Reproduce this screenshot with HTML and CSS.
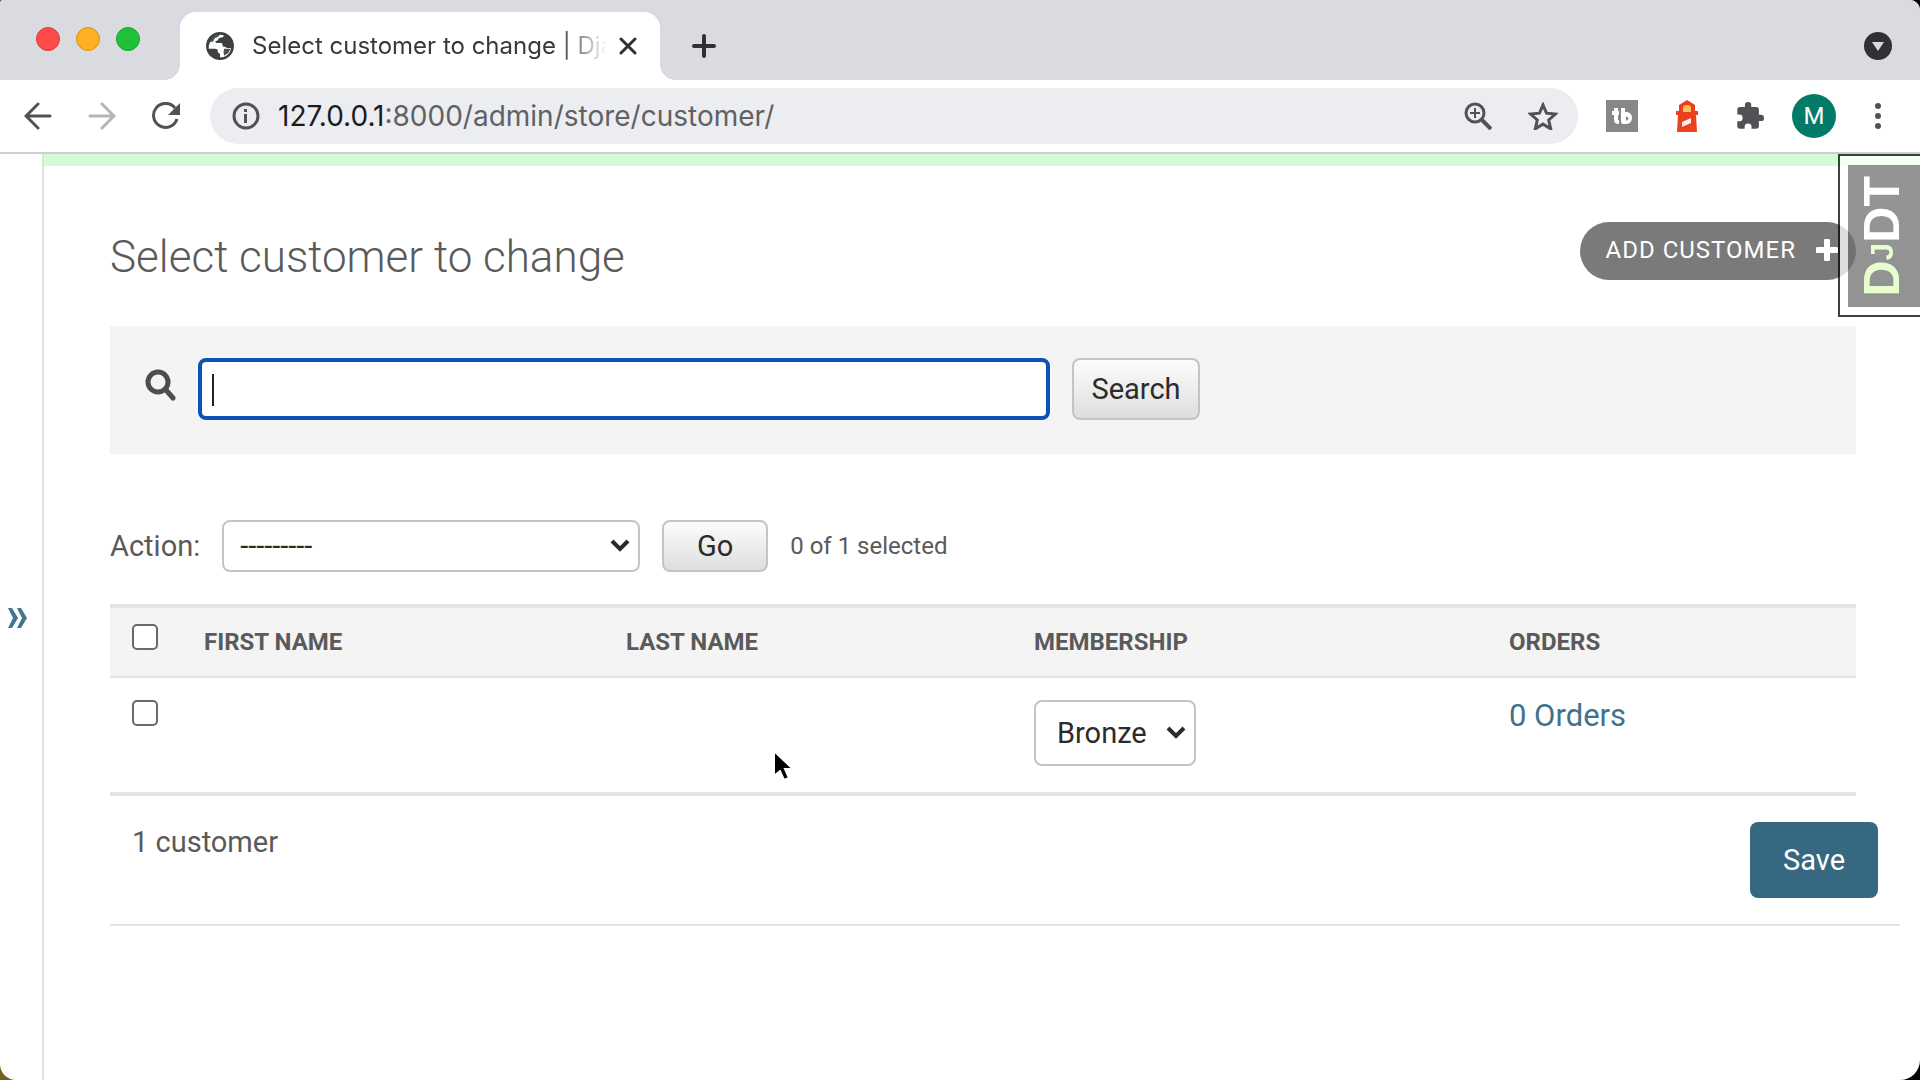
FILE: index.html
```html
<!DOCTYPE html>
<html lang="en">
<head>
<meta charset="utf-8">
<title>Select customer to change | Django site admin</title>
<link rel="stylesheet" href="styles.css">
</head>
<body>
<div class="window">
  <header class="tab-strip">
    <div class="lights">
      <span class="light light-close"></span>
      <span class="light light-min"></span>
      <span class="light light-max"></span>
    </div>
    <div class="tab">
      <svg class="icon-28" viewBox="2 2 20 20" aria-hidden="true"><path fill="#3c4043" d="M12 2C6.480 2 2 6.480 2 12s4.480 10 10 10 10-4.480 10-10S17.520 2 12 2z"/><path fill="#fff" d="M15.200 4.700c-1 .1-1 1.200-1.800 1.300l-2 .2c-.8.200-.5 1.400-1.200 1.800-.7.400-1.500.2-1.500 1 0 .6.600.9 1.200.9h3c.9 0 .8 1 .9 1.700.1.800.8 1 1.500 1 .8 0 1 .8 1.800.8h2.700c-.1 2.500-1.500 4.600-3.600 5.700-1 .6-2.600 1-4.200.9v-2c0-1-.9-.9-1.400-1.400-.5-.6.100-1.500-.5-2.100-.7-.7-1.700-.5-2.600-.5H4c-.1-1.300 0-2.600.6-3.900C5.900 6.500 8.700 4 12 4c1.200 0 2.300.2 3.200.7z"/><path fill="#3c4043" d="M4.300 9.500C5.500 6.300 8.500 4 12 4l-1.500 1.500-2.200 1L7 9H4.500zM15 14h4.500l-1.500 3-3 2-.5-2.500z" opacity=".9"/></svg>
      <span class="tab-title">Select customer to change | Dja</span>
      <button class="plain tab-close" aria-label="Close tab"><svg width="18" height="18" viewBox="0 0 18 18"><path d="M2 2l14 14M16 2L2 16" stroke="#2f3136" stroke-width="3" stroke-linecap="round"/></svg></button>
    </div>
    <button class="plain new-tab" aria-label="New tab"><svg width="24" height="24" viewBox="0 0 24 24"><path d="M12 2v20M2 12h20" stroke="#303136" stroke-width="4" stroke-linecap="round"/></svg></button>
    <button class="plain tab-search" aria-label="Search tabs"><svg width="28" height="28" viewBox="0 0 28 28"><circle cx="14" cy="14" r="14" fill="#303136"/><path d="M8 10h12l-6 9z" fill="#dadbe0"/></svg></button>
  </header>

  <div class="toolbar">
    <nav class="nav-buttons">
      <button class="plain" aria-label="Back"><svg width="28" height="28" viewBox="0 0 28 28" fill="none" stroke="#505256" stroke-width="3" stroke-linecap="round"><path d="M26 14H3M14 2L2 14l12 12"/></svg></button>
      <button class="plain" aria-label="Forward"><svg width="28" height="28" viewBox="0 0 28 28" fill="none" stroke="#b4b5b7" stroke-width="3" stroke-linecap="round"><path d="M2 14h23M14 2l12 12-12 12"/></svg></button>
      <button class="plain" aria-label="Reload"><svg width="28" height="28" viewBox="0 0 28 28"><path d="M25 17A12 12 0 1 1 23 6" fill="none" stroke="#505256" stroke-width="3"/><path d="M28 1v12H16z" fill="#505256"/></svg></button>
    </nav>
    <div class="omnibox">
      <svg width="28" height="28" viewBox="0 0 28 28" aria-hidden="true"><circle cx="14" cy="14" r="12" fill="none" stroke="#505256" stroke-width="3"/><path d="M12 7h3v3h-3zM12 12h3v9h-3z" fill="#505256"/></svg>
      <span class="url"><span class="host">127.0.0.1</span>:8000/admin/store/customer/</span>
      <button class="plain" aria-label="Zoom"><svg width="28" height="28" viewBox="0 0 28 28" fill="none" stroke="#505256"><circle cx="11" cy="11" r="9" stroke-width="3"/><path d="M18 18l9 9" stroke-width="4"/><path d="M11 6v10M6 11h10" stroke-width="2"/></svg></button>
      <button class="plain" aria-label="Bookmark"><svg width="30" height="28" viewBox="0 0 30 28"><path d="M15 3l3.500 8.200 9 .8-6.800 6 2 8.800-7.700-4.700-7.700 4.700 2-8.800-6.800-6 9-.8z" fill="none" stroke="#505256" stroke-width="3"/></svg></button>
    </div>
    <div class="extensions">
      <button class="plain" aria-label="TubeBuddy"><svg width="32" height="32" viewBox="0 0 32 32"><path fill="#878787" d="M0 0h32v32H0z"/><path d="M10 8v12q0 2 3 2M6 13h7M17 8v14" fill="none" stroke="#fff" stroke-width="4"/><path d="M17 12h4q5 1 5 6t-5 6h-4q-2 0-2-3v-9zm3 4v5l3-2.500z" fill="#fff" fill-rule="evenodd"/></svg></button>
      <button class="plain" aria-label="Lighthouse"><svg width="22" height="32" viewBox="0 0 22 32"><path fill="#ec3f1d" d="M11 0l8 5v6h3v4h-2l1 17H1l1-17H0v-4h3V5z"/><path fill="#fbc15b" d="M7 12V8q0-3 4-3t4 3v4z"/><path fill="#fff" fill-opacity=".9" d="M6 22l9-4v5l-9 4z"/></svg></button>
      <button class="plain" aria-label="Extensions"><svg width="28" height="28" viewBox="1 1 22 22"><path fill="#505256" d="M20.500 11H19V7c0-1.100-.9-2-2-2h-4V3.500a2.500 2.500 0 0 0-5 0V5H4c-1.100 0-2 .9-2 2v3.800h1.500a2.700 2.700 0 0 1 0 5.400H2V20c0 1.100.9 2 2 2h3.800v-1.500a2.700 2.700 0 0 1 5.400 0V22H17c1.100 0 2-.9 2-2v-4h1.500a2.500 2.500 0 0 0 0-5z"/></svg></button>
      <button class="plain avatar">M</button>
      <button class="plain" aria-label="Menu"><svg width="8" height="28" viewBox="0 0 8 28" fill="#505256"><circle cx="4" cy="4" r="3"/><circle cx="4" cy="14" r="3"/><circle cx="4" cy="24" r="3"/></svg></button>
    </div>
  </div>

  <div class="page">
    <aside class="nav-toggle"><button class="plain" aria-label="Toggle navigation"><svg width="20" height="20" viewBox="0 0 20 20" fill="#417690"><path d="M0 0h4l6 10-6 10H0l5-10zM9 0h4l6 10-6 10H9l5-10z"/></svg></button></aside>
    <main class="main">
      <div class="message"></div>
      <div class="content">
        <div class="title-row">
          <h1>Select customer to change</h1>
          <a class="add-link" href="#add">ADD CUSTOMER<svg width="22" height="22" viewBox="0 0 22 22" aria-hidden="true"><path d="M11 2v18M2 11h18" stroke="#fff" stroke-width="6" stroke-linecap="round"/></svg></a>
        </div>

        <form class="search-bar">
          <label for="searchbar"><svg width="32" height="32" viewBox="0 0 32 32" role="img" aria-label="Search"><circle cx="14" cy="13" r="10" fill="none" stroke="#4d4d4d" stroke-width="5"/><path d="M22 21l7 8" stroke="#4d4d4d" stroke-width="5" stroke-linecap="round"/></svg></label>
          <div class="search-field"><input type="text" id="searchbar" name="q"></div>
          <button type="button" class="button search-button">Search</button>
        </form>

        <form class="changelist">
          <div class="actions">
            <label for="action">Action:</label>
            <div class="select action-select"><select id="action"><option>---------</option></select><svg class="chevron" width="20" height="14" viewBox="0 0 20 14" aria-hidden="true"><path d="M2 2l8 8 8-8" fill="none" stroke="#2b2b2b" stroke-width="4"/></svg></div>
            <button type="button" class="button go-button">Go</button>
            <span class="counter">0 of 1 selected</span>
          </div>
          <table>
            <colgroup><col class="col-check"><col class="col-first"><col class="col-last"><col class="col-member"><col></colgroup>
            <thead>
              <tr>
                <th><input type="checkbox" aria-label="Select all"></th>
                <th scope="col">FIRST NAME</th>
                <th scope="col">LAST NAME</th>
                <th scope="col">MEMBERSHIP</th>
                <th scope="col">ORDERS</th>
              </tr>
            </thead>
            <tbody>
              <tr>
                <td><input type="checkbox" aria-label="Select customer"></td>
                <td></td>
                <td></td>
                <td><div class="select member-select"><select aria-label="Membership"><option>Bronze</option></select><svg class="chevron" width="20" height="14" viewBox="0 0 20 14" aria-hidden="true"><path d="M2 2l8 8 8-8" fill="none" stroke="#2b2b2b" stroke-width="4"/></svg></div></td>
                <td><a href="#orders">0 Orders</a></td>
              </tr>
            </tbody>
          </table>
          <div class="paginator">
            <span>1 customer</span>
            <button type="button" class="save">Save</button>
          </div>
        </form>
      </div>
    </main>
    <div class="debug-handle"><button class="plain debug-button"><span><span class="debug-d">D<small>J</small></span>DT</span></button></div>
  </div>
  <svg class="pointer" width="24" height="36" viewBox="0 0 24 36" aria-hidden="true"><path d="M2 2v25l6-5 4 9 5-2-4-9h8z" fill="#000" stroke="#fff" stroke-width="2"/></svg>
</div>
</body>
</html>
```
FILE: styles.css
```css
* { box-sizing: border-box; }

body {
  margin: 0;
  background: linear-gradient(90deg, #6b6420, #000 30%);
  font-family: Roboto, "Liberation Sans", sans-serif;
  font-size: 29px;
  color: #5a5a5a;
}

button, input, select { font: inherit; margin: 0; }

svg { display: block; flex: none; }

.plain {
  padding: 0;
  border: 0;
  background: none;
  color: inherit;
  flex: none;
}

.window {
  position: relative;
  display: flex;
  flex-direction: column;
  min-height: 100vh;
  overflow: hidden;
  background: #fff;
  border-radius: 4px 10px 20px 16px;
}

/* Browser tabs */
.tab-strip {
  display: flex;
  align-items: flex-end;
  height: 80px;
  background: #dadbe0;
}

.lights {
  display: flex;
  gap: 16px;
  width: 180px;
  height: 80px;
  padding: 27px 0 0 36px;
}

.light { width: 24px; height: 24px; border-radius: 50%; }
.light-close { background: #fc4b48; border: 1px solid #d93a37; }
.light-min { background: #fdb024; border: 1px solid #d9931b; }
.light-max { background: #1fc136; border: 1px solid #18a02b; }

.tab {
  position: relative;
  display: flex;
  align-items: center;
  width: 480px;
  height: 68px;
  padding: 0 23px 0 26px;
  background: #fff;
  border-radius: 16px 16px 0 0;
}

.tab::before, .tab::after {
  content: "";
  position: absolute;
  bottom: 0;
  width: 16px;
  height: 16px;
}
.tab::before { right: 100%; background: radial-gradient(circle at 0 0, transparent 16px, #fff 16px); }
.tab::after { left: 100%; background: radial-gradient(circle at 100% 0, transparent 16px, #fff 16px); }

.icon-28 { width: 28px; height: 28px; }

.tab-title {
  flex: 1;
  margin: 0 4px 0 18px;
  white-space: nowrap;
  font: 24px/32px Inter, sans-serif;
  color: #37383c;
  mask-image: linear-gradient(90deg, #000 calc(100% - 56px), transparent calc(100% - 8px));
}

.new-tab { margin: 0 0 22px 32px; }
.tab-search { margin: 0 28px 20px auto; }

/* Browser toolbar */
.toolbar {
  display: flex;
  align-items: center;
  height: 74px;
  padding: 0 38px 0 24px;
  border-bottom: 2px solid #cdced4;
}

.nav-buttons { display: flex; gap: 36px; }

.omnibox {
  flex: 1;
  display: flex;
  align-items: center;
  gap: 36px;
  height: 56px;
  margin: 0 28px 0 30px;
  padding: 0 20px 0 22px;
  background: #ecedf1;
  border-radius: 28px;
}

.url {
  flex: 1;
  margin-left: -18px;
  font: 28px/40px Inter, sans-serif;
  color: #5f6165;
}
.host { color: #1b1c1f; }

.extensions { display: flex; align-items: center; }
.extensions button:nth-child(2) { margin: 0 38px; }

.avatar {
  width: 44px;
  height: 44px;
  margin: 0 38px 0 28px;
  border-radius: 50%;
  background: #047a68;
  color: #fff;
  font-size: 24px;
}

/* Admin page */
.page { position: relative; flex: 1; display: flex; }

.nav-toggle {
  display: flex;
  align-items: center;
  width: 44px;
  padding: 2px 0 0 8px;
  border-right: 2px solid #e0e0e0;
}

.main { flex: 1; min-width: 0; }

.message { height: 12px; background: #d4fbd4; }

.content { padding: 56px 64px 40px 66px; }

.title-row {
  display: flex;
  justify-content: space-between;
  align-items: flex-start;
  height: 104px;
}

h1 {
  margin: 8px 0 0;
  font-size: 44px;
  line-height: 54px;
  font-weight: 300;
}

.add-link {
  display: flex;
  align-items: center;
  gap: 20px;
  height: 58px;
  padding: 0 18px 2px 26px;
  border-radius: 29px;
  background: #7a7a7a;
  color: #fff;
  font-size: 24px;
  letter-spacing: 1px;
  text-decoration: none;
}

.search-bar {
  display: flex;
  height: 128px;
  padding: 32px 34px;
  background: #f4f4f4;
}

.search-bar label { width: 54px; padding-top: 11px; }

.search-field { position: relative; width: 852px; margin-right: 22px; }

.search-field input {
  width: 100%;
  height: 62px;
  padding: 0 12px;
  border: 4px solid #0f52b5;
  border-radius: 8px;
  background: #fff;
  outline: 0;
  caret-color: transparent;
}

/* Text caret */
.search-field::after {
  content: "";
  position: absolute;
  left: 14px;
  top: 16px;
  width: 2px;
  height: 32px;
  background: #222;
}

.button {
  border: 2px solid #c4c4c4;
  border-radius: 8px;
  background: linear-gradient(#fcfcfc, #dedede);
  color: #2b2b2b;
}

.search-button { width: 128px; height: 62px; }
.go-button { width: 106px; height: 52px; }

.actions {
  display: flex;
  align-items: center;
  gap: 22px;
  margin: 66px 0 32px;
}

.select { position: relative; }

.select select {
  appearance: none;
  width: 100%;
  height: 100%;
  padding: 0 16px;
  border: 2px solid #c4c4c4;
  border-radius: 8px;
  background: #fff;
  color: #2b2b2b;
}

.chevron { position: absolute; right: 10px; top: 50%; margin-top: -7px; pointer-events: none; }

.action-select { width: 418px; height: 52px; }
.member-select { width: 162px; height: 66px; }
.member-select select { padding-left: 21px; }

.counter { font-size: 24px; }

table {
  width: 100%;
  table-layout: fixed;
  border-collapse: separate;
  border-spacing: 0;
  border-bottom: 4px solid #e3e3e3;
}

.col-check { width: 72px; }
.col-first { width: 422px; }
.col-last { width: 408px; }
.col-member { width: 475px; }

th, td { padding: 0 22px; text-align: left; vertical-align: top; }

th {
  height: 74px;
  padding-top: 16px;
  border-top: 4px solid #e3e3e3;
  border-bottom: 2px solid #e3e3e3;
  background: #f4f4f4;
  font-size: 24px;
  line-height: 36px;
  font-weight: 700;
}

td { height: 114px; padding-top: 22px; font-size: 31px; line-height: 32px; }
td .select { font-size: 29px; }

th:first-child, td:first-child { padding-right: 0; }

td a { color: #41728c; text-decoration: none; }

input[type="checkbox"] {
  appearance: none;
  display: block;
  width: 26px;
  height: 26px;
  border: 2px solid #696969;
  border-radius: 5px;
  background: #fff;
}

.paginator {
  display: flex;
  justify-content: space-between;
  align-items: flex-start;
  height: 130px;
  margin-right: -44px;
  padding: 26px 22px 0;
  border-bottom: 2px solid #e3e3e3;
  line-height: 40px;
}

.save {
  width: 128px;
  height: 76px;
  border: 0;
  border-radius: 8px;
  background: #366881;
  color: #fff;
}

/* Debug toolbar handle, laid over the page */
.debug-handle {
  position: absolute;
  top: 0;
  right: 0;
  padding: 9px 0 8px 8px;
  border: 2px solid #000;
  border-right: 0;
  background: #fff;
  opacity: .75;
}

.debug-button {
  display: flex;
  align-items: center;
  justify-content: center;
  width: 72px;
  height: 142px;
  padding-right: 4px;
  background: #707070;
  color: #fff;
  font: bold 50px/56px "Liberation Sans", sans-serif;
}
.debug-button > span { writing-mode: vertical-rl; transform: rotate(180deg); }
.debug-button small { font-size: 32px; }
.debug-d { color: #dfffc0; }

.pointer { position: absolute; left: 772px; top: 749px; }
```
